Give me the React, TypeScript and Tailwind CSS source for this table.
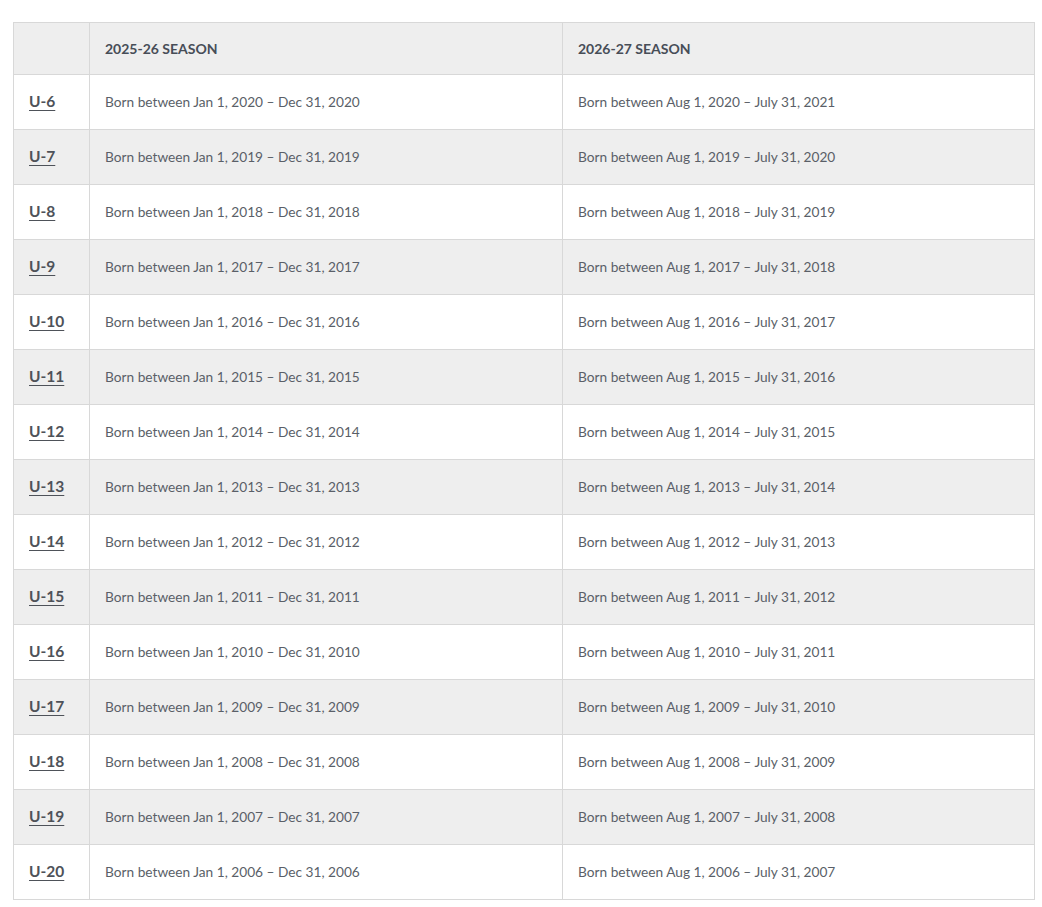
const rows = [
  { age: "U-6", a: "Jan 1, 2020 – Dec 31, 2020", b: "Aug 1, 2020 – July 31, 2021" },
  { age: "U-7", a: "Jan 1, 2019 – Dec 31, 2019", b: "Aug 1, 2019 – July 31, 2020" },
  { age: "U-8", a: "Jan 1, 2018 – Dec 31, 2018", b: "Aug 1, 2018 – July 31, 2019" },
  { age: "U-9", a: "Jan 1, 2017 – Dec 31, 2017", b: "Aug 1, 2017 – July 31, 2018" },
  { age: "U-10", a: "Jan 1, 2016 – Dec 31, 2016", b: "Aug 1, 2016 – July 31, 2017" },
  { age: "U-11", a: "Jan 1, 2015 – Dec 31, 2015", b: "Aug 1, 2015 – July 31, 2016" },
  { age: "U-12", a: "Jan 1, 2014 – Dec 31, 2014", b: "Aug 1, 2014 – July 31, 2015" },
  { age: "U-13", a: "Jan 1, 2013 – Dec 31, 2013", b: "Aug 1, 2013 – July 31, 2014" },
  { age: "U-14", a: "Jan 1, 2012 – Dec 31, 2012", b: "Aug 1, 2012 – July 31, 2013" },
  { age: "U-15", a: "Jan 1, 2011 – Dec 31, 2011", b: "Aug 1, 2011 – July 31, 2012" },
  { age: "U-16", a: "Jan 1, 2010 – Dec 31, 2010", b: "Aug 1, 2010 – July 31, 2011" },
  { age: "U-17", a: "Jan 1, 2009 – Dec 31, 2009", b: "Aug 1, 2009 – July 31, 2010" },
  { age: "U-18", a: "Jan 1, 2008 – Dec 31, 2008", b: "Aug 1, 2008 – July 31, 2009" },
  { age: "U-19", a: "Jan 1, 2007 – Dec 31, 2007", b: "Aug 1, 2007 – July 31, 2008" },
  { age: "U-20", a: "Jan 1, 2006 – Dec 31, 2006", b: "Aug 1, 2006 – July 31, 2007" },
];

export default function App() {
  return (
    <div className="min-h-screen bg-white pt-[22px] pl-[13px] font-['Lato',sans-serif]">
      <table className="w-[1021px] table-fixed border-collapse border border-[#d8d8d8]">
        <colgroup>
          <col className="w-[76px]" />
          <col className="w-[473px]" />
          <col className="w-[472px]" />
        </colgroup>
        <thead>
          <tr className="h-[52px] bg-[#eeeeee]">
            <th className="border border-[#d8d8d8]"></th>
            <th className="border border-[#d8d8d8] pl-[15px] pr-4 text-left text-[14px] font-bold text-[#474d57]">
              2025-26 SEASON
            </th>
            <th className="border border-[#d8d8d8] pl-[15px] pr-4 text-left text-[14px] font-bold text-[#474d57]">
              2026-27 SEASON
            </th>
          </tr>
        </thead>
        <tbody>
          {rows.map((row, i) => (
            <tr key={row.age} className={i % 2 === 1 ? "h-[55px] bg-[#eeeeee]" : "h-[55px] bg-white"}>
              <td className="border border-[#d8d8d8] pl-[15px] pr-4 pb-[1px]">
                <a className="text-[15.5px] font-bold text-[#4e5259] underline underline-offset-[3px]">
                  {row.age}
                </a>
              </td>
              <td className="border border-[#d8d8d8] pl-[15px] pr-4 text-[13.7px] text-[#5a5f68]">
                Born between {row.a}
              </td>
              <td className="border border-[#d8d8d8] pl-[15px] pr-4 text-[13.7px] text-[#5a5f68]">
                Born between {row.b}
              </td>
            </tr>
          ))}
        </tbody>
      </table>
    </div>
  );
}
